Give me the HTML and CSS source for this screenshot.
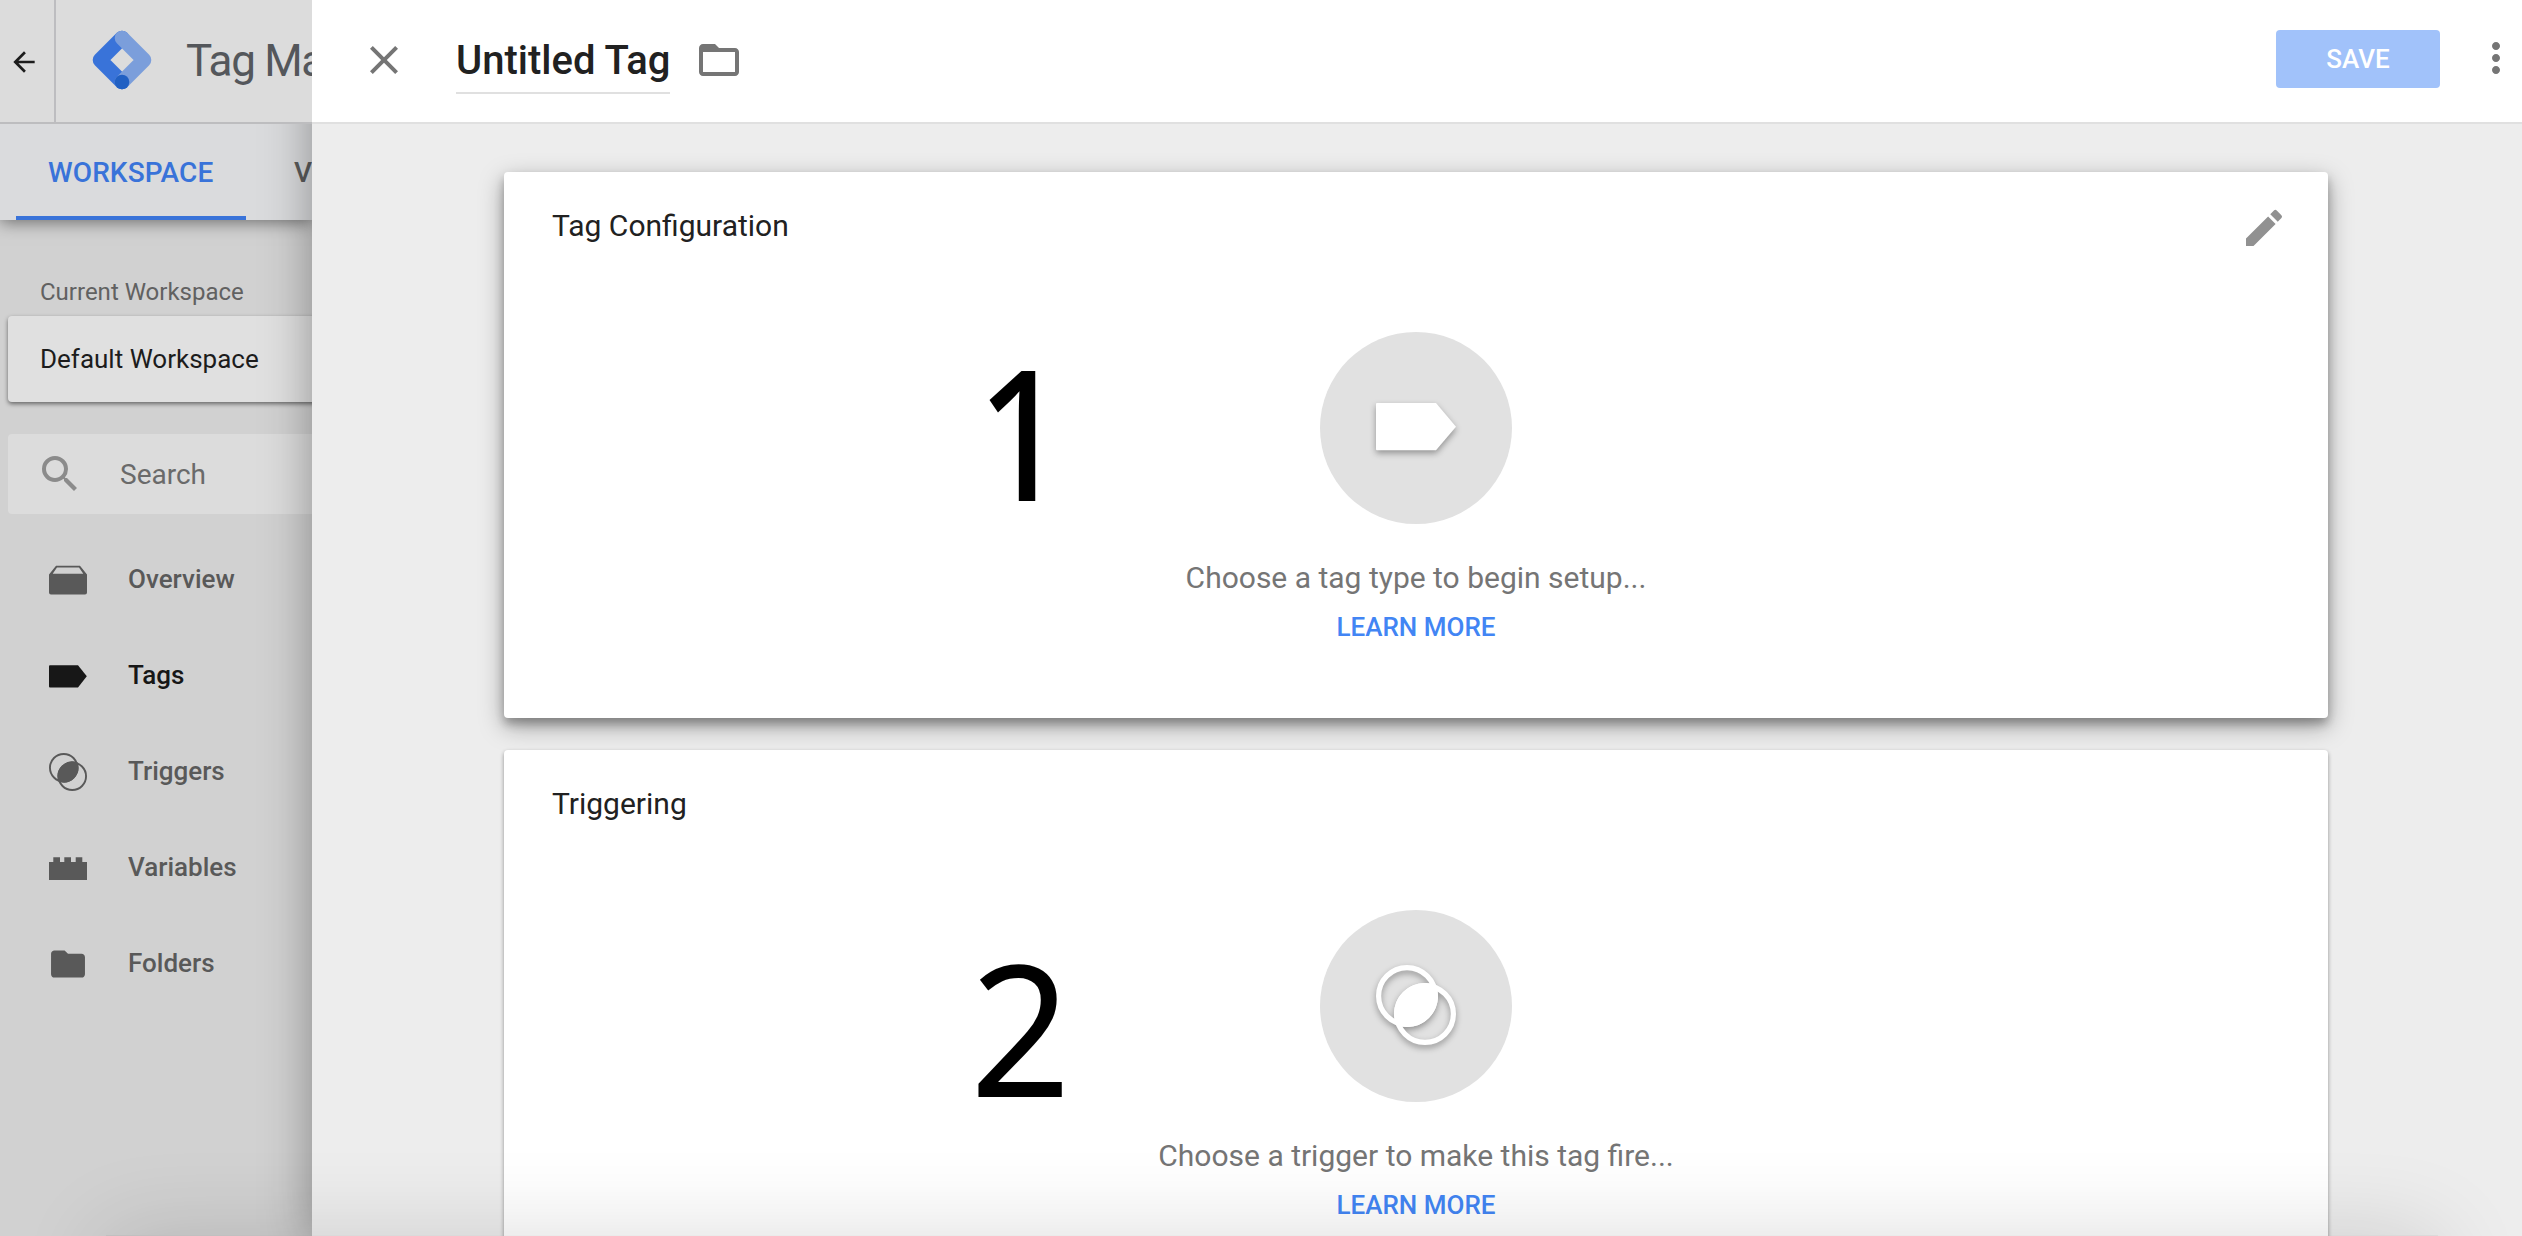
FILE: index.html
```html
<!DOCTYPE html>
<html lang="en">
<head>
<meta charset="utf-8">
<title>Tag Manager</title>
<link rel="stylesheet" href="styles.css">
</head>
<body>
<div class="app">
  <div class="workspace">
    <header class="topbar">
      <div class="back">
        <svg class="icon-back" viewBox="0 0 24 24"><path d="M20 11H7.83l5.59-5.59L12 4l-8 8 8 8 1.41-1.41L7.83 13H20v-2z"/></svg>
      </div>
      <svg class="logo" viewBox="0 0 60 60">
        <g fill="none" stroke-width="14.6" stroke-linecap="round" stroke-linejoin="round">
          <path stroke="#3973d9" d="M30 8L8 30L30 52"/>
          <path stroke="#7b9edb" d="M30 8L52 30L30 52"/>
        </g>
        <circle cx="30" cy="52" r="7.3" fill="#2160c3"/>
      </svg>
      <span class="product">Tag Manager</span>
    </header>
    <nav class="tabs">
      <span class="tab tab-active">WORKSPACE</span>
      <span class="tab">VERSIONS</span>
    </nav>
    <aside class="sidebar">
      <div class="ws-label">Current Workspace</div>
      <div class="ws-card">Default Workspace</div>
      <div class="search">
        <svg class="icon-search" viewBox="0 0 24 24"><path d="M15.5 14h-.79l-.28-.27A6.471 6.471 0 0 0 16 9.5 6.5 6.5 0 1 0 9.5 16c1.61 0 3.09-.59 4.23-1.57l.27.28v.79l5 4.99L20.49 19l-4.99-5zm-6 0C7.01 14 5 11.99 5 9.5S7.01 5 9.5 5 14 7.01 14 9.5 11.99 14 9.5 14z"/></svg>
        <span>Search</span>
      </div>
      <ul class="menu">
        <li class="item">
          <svg class="icon-menu" viewBox="0 0 38 38"><path fill-rule="evenodd" d="M7 4.8H31L38 13.5V31.5Q38 33.4 36 33.4H2Q0 33.4 0 31.5V13.5ZM8 6.4L3.7 12.8H34.3L30 6.4Z"/></svg>
          <span>Overview</span>
        </li>
        <li class="item item-active">
          <svg class="icon-menu" viewBox="0 0 38 38"><path d="M1 8.2H29L37.8 19.3L29 30.4H1Q0 30.4 0 29.4V9.2Q0 8.2 1 8.2Z"/></svg>
          <span>Tags</span>
        </li>
        <li class="item">
          <svg class="icon-menu" viewBox="0 0 80 80"><g fill="none" stroke="currentColor" stroke-width="4"><circle cx="31" cy="31" r="29"/><circle cx="49" cy="49" r="29"/></g><path d="M60 20A31 31 0 0 0 20 60A31 31 0 0 0 60 20Z"/></svg>
          <span>Triggers</span>
        </li>
        <li class="item">
          <svg class="icon-menu" viewBox="0 0 38 38"><path d="M0 13H4.300V8.300H11V13H15.300V8.300H22V13H26.700V8.300H33.300V13H38V30.900H0Z"/></svg>
          <span>Variables</span>
        </li>
        <li class="item">
          <svg class="icon-menu" viewBox="0.800 0.800 22.400 22.400"><path d="M10 4H4c-1.100 0-1.990.9-1.990 2L2 18c0 1.100.9 2 2 2h16c1.100 0 2-.9 2-2V8c0-1.100-.9-2-2-2h-8l-2-2z"/></svg>
          <span>Folders</span>
        </li>
      </ul>
    </aside>
  </div>

  <main class="panel">
    <header class="panel-head">
      <svg class="icon48 close" viewBox="0 0 24 24"><path d="M19 6.410L17.590 5 12 10.590 6.410 5 5 6.410 10.590 12 5 17.590 6.410 19 12 13.410 17.590 19 19 17.590 13.410 12z"/></svg>
      <h1 class="title">Untitled Tag</h1>
      <svg class="icon48 folder" viewBox="0 0 24 24"><path d="M20 6h-8l-2-2H4c-1.100 0-1.990.9-1.990 2L2 18c0 1.100.9 2 2 2h16c1.100 0 2-.9 2-2V8c0-1.100-.9-2-2-2zm0 12H4V8h16v10z"/></svg>
      <button class="save">SAVE</button>
      <svg class="icon48 more" viewBox="0 0 24 24"><path d="M12 8c1.100 0 2-.9 2-2s-.9-2-2-2-2 .9-2 2 .9 2 2 2zm0 2c-1.100 0-2 .9-2 2s.9 2 2 2 2-.9 2-2-.9-2-2-2zm0 6c-1.100 0-2 .9-2 2s.9 2 2 2 2-.9 2-2-.9-2-2-2z"/></svg>
    </header>
    <div class="cards">
      <section class="card card-raised">
        <div class="card-head">
          <h2>Tag Configuration</h2>
          <svg class="icon48 edit" viewBox="0 0 24 24"><path d="M3 17.250V21h3.750L17.810 9.940l-3.750-3.750L3 17.250zM20.710 7.040a.996.996 0 0 0 0-1.410l-2.340-2.340a.996.996 0 0 0-1.410 0l-1.830 1.830 3.750 3.750 1.830-1.830z"/></svg>
        </div>
        <div class="disc">
          <svg class="glyph" viewBox="0 0 80 80"><path d="M1 16H60L80 39.700L60 63.300H1Q0 63.300 0 62.300V17Q0 16 1 16Z"/></svg>
        </div>
        <p class="hint">Choose a tag type to begin setup...</p>
        <a class="learn">LEARN MORE</a>
        <span class="step step-one">1</span>
      </section>
      <section class="card">
        <div class="card-head"><h2>Triggering</h2></div>
        <div class="disc">
          <svg class="glyph" viewBox="0 0 80 80"><g fill="none" stroke="#fff" stroke-width="5.200"><circle cx="31" cy="31" r="28.400"/><circle cx="49" cy="49" r="28.400"/></g><path d="M60 20A31 31 0 0 0 20 60A31 31 0 0 0 60 20Z"/></svg>
        </div>
        <p class="hint">Choose a trigger to make this tag fire...</p>
        <a class="learn">LEARN MORE</a>
        <span class="step step-two">2</span>
      </section>
    </div>
  </main>
  <div class="bottom-shade"></div>
</div>
</body>
</html>
```

FILE: styles.css
```css
* { box-sizing: border-box; margin: 0; padding: 0; }

body { font-family: Roboto, "Liberation Sans", sans-serif; overflow: hidden; }

svg { display: block; flex: none; fill: currentColor; }

.app {
  position: relative;
  display: flex;
  width: 2522px;
  height: 1236px;
  overflow: hidden;
  background: #d1d1d1;
}

/* Dimmed workspace behind the panel */
.workspace {
  width: 312px;
  flex: none;
  display: flex;
  flex-direction: column;
  overflow: hidden;
  white-space: nowrap;
}

.topbar {
  position: relative;
  z-index: 2;
  display: flex;
  align-items: center;
  height: 124px;
  flex: none;
  background: #dcdcdc;
  border-bottom: 2px solid #bdbdbf;
}

.back {
  width: 56px;
  height: 122px;
  flex: none;
  padding: 46px 0 0 8px;
  border-right: 2px solid #bdbdc0;
  color: #1c1c1c;
}
.icon-back { width: 32px; height: 32px; }

.logo { width: 60px; height: 60px; margin: 0 0 2px 36px; }

.product {
  margin-left: 34px;
  font-size: 44px;
  line-height: 60px;
  letter-spacing: -1.3px;
  color: #54575b;
}

.tabs {
  display: flex;
  height: 96px;
  flex: none;
  padding-left: 16px;
  background: #dadbdd;
  box-shadow: 0 2px 16px rgba(0, 0, 0, .5);
  position: relative;
}
.tab {
  flex: none;
  height: 96px;
  padding: 0 32px 0 48px;
  line-height: 97px;
  font-size: 28px;
  font-weight: 500;
  color: #5b5b5b;
}
.tab-active {
  width: 230px;
  padding: 0 0 0 32px;
  letter-spacing: 0.1px;
  color: #3973d9;
  border-bottom: 4px solid #3973d9;
}

.sidebar { padding: 47px 0 0 8px; }

.ws-label {
  height: 49px;
  padding-left: 32px;
  line-height: 51px;
  font-size: 24px;
  color: #616161;
}

.ws-card {
  width: 400px;
  height: 86px;
  padding-left: 32px;
  line-height: 87px;
  font-size: 26px;
  color: #1c1c1c;
  background: #e0e0e0;
  border-radius: 4px;
  box-shadow: 0 2px 4px rgba(0, 0, 0, .5);
}

.search {
  display: flex;
  align-items: center;
  width: 400px;
  height: 80px;
  margin-top: 32px;
  padding-left: 28px;
  gap: 36px;
  font-size: 28px;
  color: #6a6a6a;
  background: #dcdcdc;
  border-radius: 4px;
}
.icon-search { width: 48px; height: 48px; color: #8b8b8b; }

.menu { list-style: none; padding-top: 17px; }
.item {
  display: flex;
  align-items: center;
  height: 96px;
  padding-left: 41px;
  gap: 41px;
  font-size: 26px;
  font-weight: 500;
  color: #595959;
}
.icon-menu { width: 38px; height: 38px; margin-top: 2px; }
.item-active { color: #171717; }

/* Slide-over editor panel */
.panel {
  position: relative;
  flex: 1;
  display: flex;
  flex-direction: column;
  background: #ededed;
  box-shadow: 0 4px 46px rgba(0, 0, 0, .36);
}

.panel-head {
  display: flex;
  align-items: flex-start;
  height: 124px;
  flex: none;
  padding: 0 2px 0 48px;
  background: #fff;
  border-bottom: 2px solid #e0e0e0;
  color: #757575;
}
.icon48 { width: 48px; height: 48px; }
.close, .folder { margin-top: 36px; }
.title {
  height: 68px;
  margin: 26px 25px 0 48px;
  line-height: 69px;
  font-size: 40px;
  font-weight: 500;
  color: #212121;
  border-bottom: 2px solid #e0e0e0;
}
.save {
  width: 164px;
  height: 58px;
  margin: 30px 32px 0 auto;
  border: 0;
  border-radius: 4px;
  background: #a1c2fa;
  color: #fff;
  font: 500 26px/58px Roboto, sans-serif;
}
.more { margin-top: 34px; }

.cards {
  display: flex;
  flex-direction: column;
  gap: 32px;
  padding: 48px 194px 0 192px;
}
.card {
  position: relative;
  display: flex;
  flex-direction: column;
  align-items: center;
  height: 546px;
  flex: none;
  background: #fff;
  border-radius: 4px;
  box-shadow: 0 2px 4px rgba(0, 0, 0, .4);
}
.card-raised { box-shadow: 0 8px 24px rgba(0, 0, 0, .34), 0 6px 10px rgba(0, 0, 0, .26); }

.card-head {
  display: flex;
  justify-content: space-between;
  align-self: stretch;
  height: 160px;
  padding: 32px 40px 0 48px;
}
.card-head h2 {
  line-height: 43px;
  font-size: 30px;
  font-weight: 400;
  color: #212121;
}
.edit { color: #919191; }

.disc {
  display: flex;
  align-items: center;
  justify-content: center;
  width: 192px;
  height: 192px;
  border-radius: 50%;
  background: #e1e1e1;
}
.glyph {
  width: 80px;
  height: 80px;
  margin: 0 1px 2px 0;
  color: #fff;
  overflow: visible;
  filter: drop-shadow(0 3px 3px rgba(0, 0, 0, .35));
}
.hint {
  margin-top: 34px;
  line-height: 40px;
  font-size: 30px;
  color: #757575;
}
.learn {
  margin-top: 9px;
  line-height: 40px;
  font-size: 26px;
  font-weight: 500;
  color: #4285f4;
}

/* Numbered annotations laid over the cards */
.step {
  position: absolute;
  font: 182px/200px "Noto Sans", sans-serif;
  color: #000;
}
.step-one {
  left: 473px;
  top: 158px;
  font-weight: 500;
  transform: scaleX(.86);
  transform-origin: 0 0;
}
.step-two {
  left: 466px;
  top: 176px;
  transform: scaleX(.97);
  transform-origin: 0 0;
}

.bottom-shade {
  position: absolute;
  left: 106px;
  right: 84px;
  top: 1235px;
  height: 140px;
  background: rgba(0, 0, 0, .08);
  box-shadow: 0 0 90px rgba(0, 0, 0, .14);
}
```
